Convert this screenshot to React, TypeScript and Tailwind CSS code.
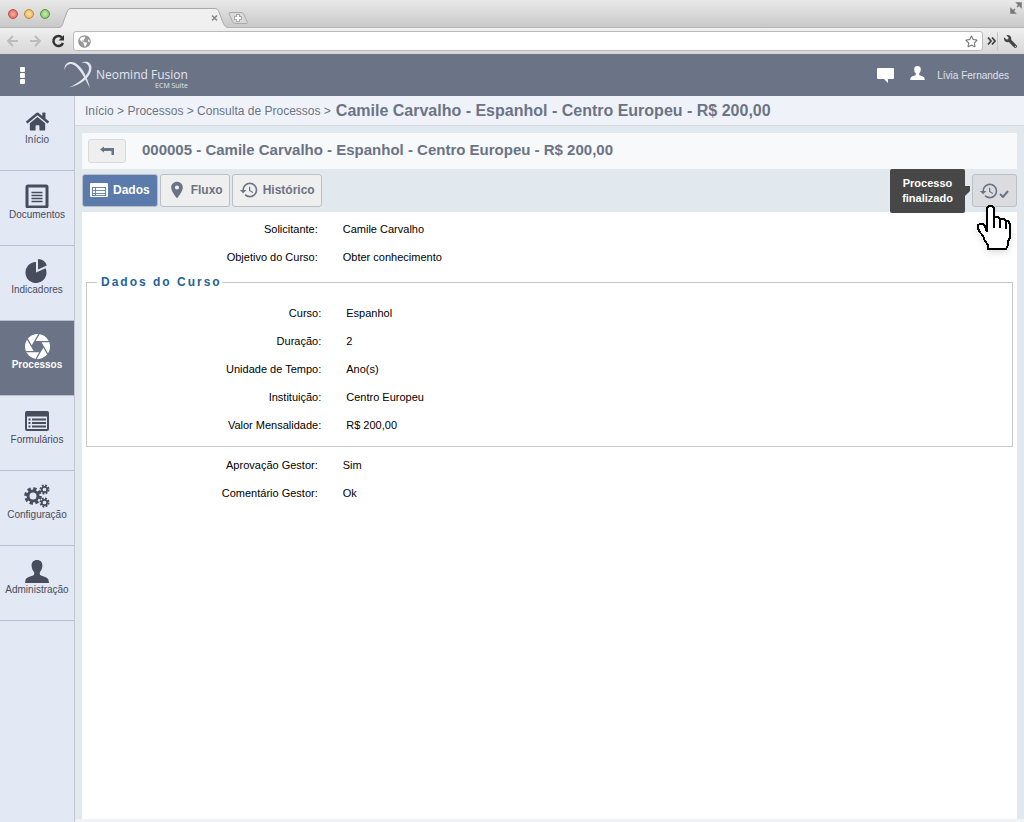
import type { ReactNode } from 'react';
import { FaHome, FaRegStar, FaWrench, FaGlobeAmericas } from 'react-icons/fa';
import { MdHistory, MdPlace } from 'react-icons/md';

/* ---------- Icons ---------- */

const UserIcon = ({ className }: { className: string }) => (
    <svg viewBox="0 0 24 23" className={className} fill="currentColor">
        <path d="M12 0c-3.600 0-5.600 2.300-5.400 5.800.1 2.600 1 4.800 2.400 6.200.5 1.500.3 2.700-.6 3.300C6.500 16.500 1 17.300.5 20L0 23h24l-.5-3c-.5-2.700-6-3.500-7.900-4.700-.9-.6-1.100-1.800-.6-3.300 1.400-1.400 2.300-3.600 2.400-6.200C17.600 2.300 15.600 0 12 0z" />
    </svg>
);

const DocumentIcon = () => (
    <svg viewBox="0 0 24 24" className="h-6 w-6" fill="none" stroke="currentColor">
        <rect x="2" y="2" width="20" height="21" rx="1" strokeWidth="3" />
        <path d="M6.500 8.500h11M6.500 11.500h11M6.500 14.500h11M6.500 17.500h11" strokeWidth="1.500" />
    </svg>
);

const PieIcon = () => (
    <svg viewBox="0 0 24 24" className="h-6 w-6" fill="currentColor">
        <path d="M11 3v10.500l9.600-4.200A10.500 10.500 0 1 1 11 3z" />
        <path d="M13 0a9.500 9.500 0 0 1 8.800 6.500L13 10.500z" />
    </svg>
);

const ApertureIcon = () => (
    <svg viewBox="2 2 20 20" className="h-[25px] w-[25px]">
        <circle cx="12" cy="12" r="10" fill="currentColor" />
        <path d="M14.310 8H9.690L7.380 12l2.310 4h4.620l2.310-4z" fill="#6b7386" />
        <path
            d="m14.310 8 5.740 9.940M9.690 8h11.480M7.380 12l5.740-9.940M9.690 16 3.950 6.060M14.310 16H2.830M16.620 12l-5.740 9.940"
            stroke="#6b7386"
            strokeWidth="1"
        />
    </svg>
);

const FormIcon = () => (
    <svg viewBox="0 0 24 20" className="h-5 w-6" fill="none" stroke="currentColor">
        <rect x="1" y="1" width="22" height="18" rx="1" strokeWidth="2" />
        <path d="M1 3h22" strokeWidth="5" />
        <path d="M3.500 8.500h2M7 8.500h14M3.500 12h2M7 12h14M3.500 15.500h2M7 15.500h14" strokeWidth="1.800" />
    </svg>
);

/* Each cog is a ring with a dashed ring of eight teeth around it */
const CogsIcon = () => (
    <svg viewBox="0 0 26 24" className="h-6 w-[26px]" fill="none" stroke="currentColor">
        <circle cx="9" cy="12" r="5" strokeWidth="3" />
        <circle cx="9" cy="12" r="7.300" strokeWidth="3" strokeDasharray="3.300 2.433" />
        <circle cx="20.500" cy="5.500" r="2.700" strokeWidth="1.700" />
        <circle cx="20.500" cy="5.500" r="4.100" strokeWidth="1.800" strokeDasharray="1.900 1.320" />
        <circle cx="20.500" cy="18.500" r="2.700" strokeWidth="1.700" />
        <circle cx="20.500" cy="18.500" r="4.100" strokeWidth="1.800" strokeDasharray="1.900 1.320" />
    </svg>
);

const ListIcon = () => (
    <svg viewBox="0 0 18 14" className="h-[14px] w-[18px]">
        <rect width="18" height="14" rx="1" fill="#fff" />
        <path d="M2 4.500h14M2 7.500h14M2 10.500h14M2 12.500h14M2.500 4v9M5.500 4v9M15.500 4v9" stroke="#5b7bad" strokeWidth="0.900" />
    </svg>
);

const LogoMark = () => (
    <svg viewBox="0 0 28 28" className="h-7 w-7" fill="#e3e6ee">
        <path d="M.5 9C0 3 4 .5 8 1c8 1 15 13 18 26.500C21 17 14 4 7.500 3 4 2.500 1.500 4.500.5 9z" />
        <path d="M17 2c4-2.500 10.500-1.500 10.500 5C27.500 15 18 24 5 26.500 15 22 25 14 25 7.500 25 3 21 1.200 17 2z" />
    </svg>
);

const HandCursor = () => (
    <svg
        viewBox="0 0 35 46"
        className="pointer-events-none absolute left-[5px] top-[30px] z-20 h-[46px] w-[35px] drop-shadow-md"
        fill="#fff"
        stroke="#000"
        strokeWidth="2"
        shapeRendering="crispEdges"
    >
        <path d="M10 28V4l2-2h3l2 2v9h4l2 2h4l2 2h2l2 3v14l-2 3v4l-2 4H11v-4l-3-4-2-5-4-5-1-3v-3l2-1h3l2 2z" />
        <path d="M17 13v11M23 15v9M29 17v8" />
    </svg>
);

/* ---------- Browser chrome ---------- */

const BrowserChrome = () => (
    <div>
        <div className="flex h-7 items-start border-b border-[#b5b5b5] bg-gradient-to-b from-[#e9e9e9] to-[#c9c9c9]">
            <div className="flex w-[58px] gap-[6px] pl-2 pt-[9px]">
                <span className="h-[10px] w-[10px] rounded-full border border-[#b0524c] bg-radial from-[#ffb3ac] to-[#e5483f]"></span>
                <span className="h-[10px] w-[10px] rounded-full border border-[#b88a3c] bg-radial from-[#ffe6a6] to-[#eda63a]"></span>
                <span className="h-[10px] w-[10px] rounded-full border border-[#5c9148] bg-radial from-[#c9f0b4] to-[#6fb954]"></span>
            </div>
            <svg viewBox="0 0 194 28" className="-mb-px h-7 w-[194px]" fill="none">
                <path d="M0 28c4-.5 4.500-3 6-8l3-8c1-3 2-3.500 5-3.500h142c3 0 4 .5 5 3.500l3 8c2 5 3 7.500 7 8" fill="#f0f0f0" stroke="#a9a9a9" />
                <path d="M154 15.500l5 5m0-5l-5 5" stroke="#888" strokeWidth="1.600" />
                <path d="M171 13.500c0-1 .5-1 2-1h10c2 0 2.500 1 3 2l3 7c.5 1.500 0 2-1 2h-10c-2 0-3-1-3.500-2z" fill="#dadada" stroke="#aaa" />
                <path d="M176 18h8m-4-4v8" stroke="#aaa" strokeWidth="4" />
                <path d="M177 18h6m-3-3v6" stroke="#fff" strokeWidth="2" />
            </svg>
            <svg viewBox="0 0 12 12" className="ml-auto mr-[2px] mt-[2px] h-3 w-3" fill="#777" stroke="#777" strokeWidth="1.500">
                <path d="M7 1h4v4zM1 7v4h4zM7 5l3-3M2 10l3-3" />
            </svg>
        </div>
        <div className="flex h-[26px] items-center bg-gradient-to-b from-[#f0f0f0] to-[#d6d6d6] pl-[6px] pr-[7px]">
            <svg viewBox="0 0 36 12" className="h-3 w-9" fill="none" stroke="#bcbcbc" strokeWidth="2">
                <path d="M12 6H2m5-5L2 6l5 5M24 6h10m-5-5 5 5-5 5" />
            </svg>
            <svg viewBox="0 0 14 14" className="ml-[9px] h-[14px] w-[14px]" fill="none" stroke="#333" strokeWidth="2.500">
                <path d="M11 3.500A5 5 0 1 0 12 9" />
                <path d="M13 1v5.500H7.500z" fill="#333" stroke="none" />
            </svg>
            <div className="ml-2 flex h-5 flex-1 items-center rounded-[3px] border border-[#bbb] bg-white px-1 text-[#999]">
                <FaGlobeAmericas size={13} />
                <input aria-label="URL" className="min-w-0 flex-1 bg-transparent px-1 text-xs outline-none" />
                <FaRegStar size={13} className="text-[#777]" />
            </div>
            <svg viewBox="0 0 9 8" className="ml-1 h-2 w-[9px]" fill="none" stroke="#444" strokeWidth="1.800">
                <path d="M1 .5 4 4 1 7.500M5 .5 8 4 5 7.500" />
            </svg>
            <span className="ml-px h-[18px] w-px bg-[#c4c4c4]"></span>
            <FaWrench size={13} className="ml-[6px] -scale-x-100 text-[#444]" />
        </div>
    </div>
);

/* ---------- App header ---------- */

const Header = () => (
    <header className="flex h-[42px] items-center bg-[#6b7386] pl-5 pr-[15px] text-white">
        <button aria-label="Menu" className="flex flex-col gap-px">
            <span className="h-[5px] w-[5px] rounded-[1px] bg-white"></span>
            <span className="h-[5px] w-[5px] rounded-[1px] bg-white"></span>
            <span className="h-[5px] w-[5px] rounded-[1px] bg-white"></span>
        </button>
        <div className="ml-[39px] flex items-center">
            <LogoMark />
            <div className="ml-1 pt-2 text-right font-['Open_Sans'] text-[#e3e6ee]">
                <div className="text-[12px] leading-[14px]">Neomind Fusion</div>
                <div className="text-[7px] leading-[8px]">ECM Suite</div>
            </div>
        </div>
        <button aria-label="Mensagens" className="ml-auto">
            <svg viewBox="0 0 17 15" className="h-[15px] w-[17px]" fill="currentColor">
                <path d="M1 0h15q1 0 1 1v9q0 1-1 1h-5v4l-4-4H1q-1 0-1-1V1q0-1 1-1z" />
            </svg>
        </button>
        <a href="#" className="ml-4 flex items-center gap-3 text-[10px] text-[#dfe3ec]">
            <UserIcon className="mb-1 h-[14px] w-[15px] text-white" />
            <span>Lívia Fernandes</span>
        </a>
    </header>
);

/* ---------- Sidebar ---------- */

const menu: { label: string; icon: ReactNode; active?: boolean }[] = [
    { label: 'Início', icon: <FaHome size={23} /> },
    { label: 'Documentos', icon: <DocumentIcon /> },
    { label: 'Indicadores', icon: <PieIcon /> },
    { label: 'Processos', icon: <ApertureIcon />, active: true },
    { label: 'Formulários', icon: <FormIcon /> },
    { label: 'Configuração', icon: <CogsIcon /> },
    { label: 'Administração', icon: <UserIcon className="h-[23px] w-6" /> },
];

const Sidebar = () => (
    <nav className="w-[75px] shrink-0 border-r border-[#c3c7d3] bg-[#e2e8f4]">
        {menu.map((item) => (
            <a
                key={item.label}
                href="#"
                className={
                    item.active
                        ? 'flex h-[75px] flex-col items-center border-b border-[#b9bfd0] bg-[#6b7386] pt-3 text-[10px] font-bold leading-3 text-white'
                        : 'flex h-[75px] flex-col items-center border-b border-[#b9bfd0] pt-3 text-[10px] leading-3 text-[#474d5c]'
                }
            >
                <span className="flex h-[26px] items-center">{item.icon}</span>
                {item.label}
            </a>
        ))}
    </nav>
);

/* ---------- Form data ---------- */

const Field = ({ label, value }: { label: string; value: string }) => (
    <div className="grid h-7 grid-cols-[1fr_3fr] items-center">
        <dt className="text-right">{label}:</dt>
        <dd className="pl-[25px]">{value}</dd>
    </div>
);

const tabClass = 'flex h-[33px] items-center rounded-[3px] border border-[#bcc0c4] bg-[#efefef] px-[6px] pb-px text-[#6b7386]';

export default function App() {
    return (
        <div className="flex min-h-screen flex-col bg-[#e1e8ee] font-['Liberation_Sans',Arial,sans-serif]">
            <BrowserChrome />
            <Header />
            <div className="flex flex-1">
                <Sidebar />
                <main className="flex min-w-0 flex-1 flex-col">
                    {/* Breadcrumb */}
                    <div className="flex h-[30px] items-center gap-[5px] border-b border-[#d5d9de] bg-[#eff3f9] pl-[10px] text-[12px] text-[#6b7386]">
                        <div className="pt-px">
                            <a href="#">Início</a> &gt; <a href="#">Processos</a> &gt; <a href="#">Consulta de Processos</a> &gt;
                        </div>
                        <h1 className="text-[16px] font-bold">Camile Carvalho - Espanhol - Centro Europeu - R$ 200,00</h1>
                    </div>

                    <div className="flex flex-1 flex-col px-[7px] pt-[7px]">
                        {/* Title bar */}
                        <div className="flex h-9 items-center gap-4 bg-[#f7f9fb] pb-px pl-[6px]">
                            <button
                                aria-label="Voltar"
                                className="flex h-6 w-[38px] items-center justify-center rounded-[3px] border border-[#d9d9d9] bg-[#efefef]"
                            >
                                <svg viewBox="0 0 14 9" className="h-[9px] w-[14px]" fill="#6b7386">
                                    <path d="M0 3.500 4 .5V2h10v7h-2.500V5H4v1.500z" />
                                </svg>
                            </button>
                            <h2 className="text-[15px] font-bold text-[#6b7386]">
                                000005 - Camile Carvalho - Espanhol - Centro Europeu - R$ 200,00
                            </h2>
                        </div>

                        {/* Tabs */}
                        <div className="flex gap-[2px] pb-[5px] pt-[5px] text-[12px] font-bold">
                            <button className="flex h-[33px] items-center gap-[5px] rounded-[3px] border border-[#bcc0c4] bg-[#5b7bad] px-[7px] pb-px text-white">
                                <ListIcon />
                                Dados
                            </button>
                            <button className={tabClass}>
                                <MdPlace size={20} className="mr-1" />
                                Fluxo
                            </button>
                            <button className={tabClass}>
                                <MdHistory size={20} className="mr-1" />
                                Histórico
                            </button>
                            <div className="relative ml-auto">
                                <button
                                    aria-label="Processo finalizado"
                                    className="flex h-[33px] w-[45px] items-center justify-center rounded-[3px] border border-[#bcc0c4] bg-[#dcdbe0] pr-[2px] text-[#6b7386]"
                                >
                                    <MdHistory size={20} />
                                    <svg viewBox="0 0 10 8" className="mt-[6px] h-2 w-[10px]" fill="none" stroke="currentColor" strokeWidth="2">
                                        <path d="M1 4l3 3 5-6" />
                                    </svg>
                                </button>
                                <div
                                    role="tooltip"
                                    className="absolute right-[52px] top-[-5px] z-10 w-[75px] rounded-[2px] bg-[#474747] py-[7px] text-center text-[11px] leading-[15px] text-white"
                                >
                                    Processo finalizado
                                    <svg viewBox="0 0 5 10" className="absolute left-full top-[17px] h-[10px] w-[5px]" fill="#474747">
                                        <path d="M0 0h5v5L0 10z" />
                                    </svg>
                                </div>
                                <HandCursor />
                            </div>
                        </div>

                        {/* Process data */}
                        <section className="flex-1 bg-white px-1 pt-[3px] text-[11px] text-black">
                            <dl>
                                <Field label="Solicitante" value="Camile Carvalho" />
                                <Field label="Objetivo do Curso" value="Obter conhecimento" />
                            </dl>
                            <fieldset className="mb-1 mt-[3px] border border-[#c8c8c8] pb-[7px] pl-1">
                                <legend className="ml-[6px] pl-1 text-[12px] font-bold leading-4 tracking-[2px] text-[#1f6396]">
                                    Dados do Curso
                                </legend>
                                <dl className="pt-[9px]">
                                    <Field label="Curso" value="Espanhol" />
                                    <Field label="Duração" value="2" />
                                    <Field label="Unidade de Tempo" value="Ano(s)" />
                                    <Field label="Instituição" value="Centro Europeu" />
                                    <Field label="Valor Mensalidade" value="R$ 200,00" />
                                </dl>
                            </fieldset>
                            <dl>
                                <Field label="Aprovação Gestor" value="Sim" />
                                <Field label="Comentário Gestor" value="Ok" />
                            </dl>
                        </section>
                    </div>
                    <div className="h-[3px] bg-[#eff3f9]"></div>
                </main>
            </div>
        </div>
    );
}
